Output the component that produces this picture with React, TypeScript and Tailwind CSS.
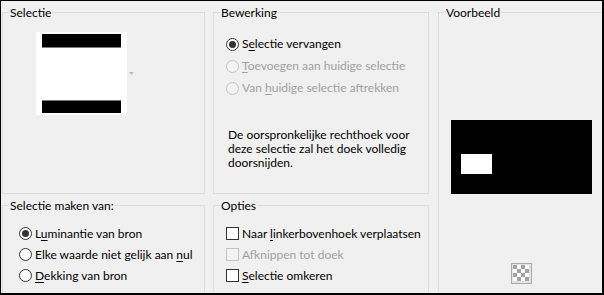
import React from 'react';

const font = "font-['Lato','Noto_Sans',sans-serif]";

interface LabelProps {
    pre?: string;
    hot: string;
    post?: string;
}

const Hot = ({ pre, hot, post }: LabelProps) => (
    <span className="whitespace-nowrap">
        {pre}
        <span className="underline underline-offset-[2px]">{hot}</span>
        {post}
    </span>
);

const Radio = ({ checked, disabled }: { checked?: boolean; disabled?: boolean }) => (
    <span
        className={
            "w-[13px] h-[13px] shrink-0 rounded-full border flex items-center justify-center " +
            (disabled ? "border-[#c4c4c4] bg-[#f3f3f3]" : "border-[#333333] bg-white")
        }
    >
        {checked && <span className="w-[7px] h-[7px] rounded-full bg-[#333333]" />}
    </span>
);

const Check = ({ disabled }: { disabled?: boolean }) => (
    <span
        className={
            "w-[13px] h-[13px] shrink-0 border " +
            (disabled ? "border-[#c4c4c4] bg-[#f3f3f3]" : "border-[#333333] bg-white")
        }
    />
);

const Legend = ({ children }: { children: React.ReactNode }) => (
    <legend className="ml-[6px] px-[1px] leading-[15px]">{children}</legend>
);

const Checker = () => (
    <svg width="21" height="21" viewBox="0 0 21 21">
        <rect x="0.5" y="0.5" width="20" height="20" fill="#e3e3e3" stroke="#a9a9a9" />
        <rect x="2" y="2" width="16" height="16" fill="#ffffff" />
        {[0, 1, 2, 3].map((r) =>
            [0, 1, 2, 3].map((c) =>
                (r + c) % 2 === 0 ? (
                    <rect key={`${r}-${c}`} x={2 + c * 4} y={2 + r * 4} width="4" height="4" fill="#a3a3a3" />
                ) : null
            )
        )}
    </svg>
);

export default function App() {
    return (
        <div className={`w-[604px] h-[295px] overflow-hidden bg-[#f0f0f0] border-t border-l border-r-2 border-b-2 border-black flex text-[12px] text-black ${font}`}>
            {/* left column */}
            <div className="ml-[1px] w-[203px] flex flex-col">
                <fieldset className="mt-[4px] h-[189px] min-w-0 border border-[#dcdcdc]">
                    <Legend>Selectie</Legend>
                    <div className="mt-[12px] ml-[33px] flex items-center">
                        <div className="w-[91px] h-[83px] bg-white flex flex-col justify-between items-center py-[2px]">
                            <div className="w-[79px] h-[14px] bg-black border-b border-[#7a7a7a]" />
                            <div className="w-[79px] h-[13px] bg-black border-t border-[#7a7a7a]" />
                        </div>
                        <svg className="ml-[2px]" width="5" height="3" viewBox="0 0 5 3">
                            <path d="M0 0h5L2.5 3z" fill="#bdbdbd" />
                        </svg>
                    </div>
                </fieldset>
                <fieldset className="mt-[4px] flex-1 min-w-0 border border-b-0 border-[#dcdcdc]">
                    <Legend>Selectie maken van:</Legend>
                    <div className="mt-[10px] pl-[16px] flex flex-col">
                        <div className="h-[21px] flex items-center gap-[3px]">
                            <Radio checked />
                            <Hot pre="L" hot="u" post="minantie van bron" />
                        </div>
                        <div className="h-[21px] flex items-center gap-[3px]">
                            <Radio />
                            <Hot pre="Elke waarde niet gelijk aan " hot="n" post="ul" />
                        </div>
                        <div className="h-[21px] flex items-center gap-[3px]">
                            <Radio />
                            <Hot hot="D" post="ekking van bron" />
                        </div>
                    </div>
                </fieldset>
            </div>

            {/* middle column */}
            <div className="ml-[8px] w-[216px] flex flex-col">
                <fieldset className="mt-[4px] h-[189px] min-w-0 border border-[#dcdcdc]">
                    <Legend>Bewerking</Legend>
                    <div className="mt-[13px] pl-[12px] flex flex-col">
                        <div className="h-[22px] flex items-center gap-[3px]">
                            <Radio checked />
                            <Hot pre="S" hot="e" post="lectie vervangen" />
                        </div>
                        <div className="h-[22px] flex items-center gap-[3px] text-[#a0a0a0]">
                            <Radio disabled />
                            <Hot hot="T" post="oevoegen aan huidige selectie" />
                        </div>
                        <div className="h-[22px] flex items-center gap-[3px] text-[#a0a0a0]">
                            <Radio disabled />
                            <Hot pre="Van " hot="h" post="uidige selectie aftrekken" />
                        </div>
                    </div>
                    <p className="mt-[29px] pl-[14px] leading-[14px]">
                        De oorspronkelijke rechthoek voor
                        <br />
                        deze selectie zal het doek volledig
                        <br />
                        doorsnijden.
                    </p>
                </fieldset>
                <fieldset className="mt-[4px] flex-1 min-w-0 border border-b-0 border-[#dcdcdc]">
                    <Legend>Opties</Legend>
                    <div className="mt-[10px] pl-[12px] flex flex-col">
                        <div className="h-[21px] flex items-center gap-[3px]">
                            <Check />
                            <Hot pre="Naar " hot="l" post="inkerbovenhoek verplaatsen" />
                        </div>
                        <div className="h-[21px] flex items-center gap-[3px] text-[#a0a0a0]">
                            <Check disabled />
                            <Hot pre="Af" hot="k" post="nippen tot doek" />
                        </div>
                        <div className="h-[21px] flex items-center gap-[3px]">
                            <Check />
                            <Hot hot="S" post="electie omkeren" />
                        </div>
                    </div>
                </fieldset>
            </div>

            {/* preview column */}
            <fieldset className="ml-[9px] mt-[4px] flex-1 min-w-0 border border-r-0 border-b-0 border-[#dcdcdc]">
                <Legend>Voorbeeld</Legend>
                <div className="ml-[12px] mt-[100px] w-[141px] flex flex-col items-center">
                    <div className="w-[141px] h-[74px] bg-black pl-[10px] pt-[34px]">
                        <div className="w-[31px] h-[20px] bg-white" />
                    </div>
                    <div className="mt-[69px]">
                        <Checker />
                    </div>
                </div>
            </fieldset>
        </div>
    );
}
